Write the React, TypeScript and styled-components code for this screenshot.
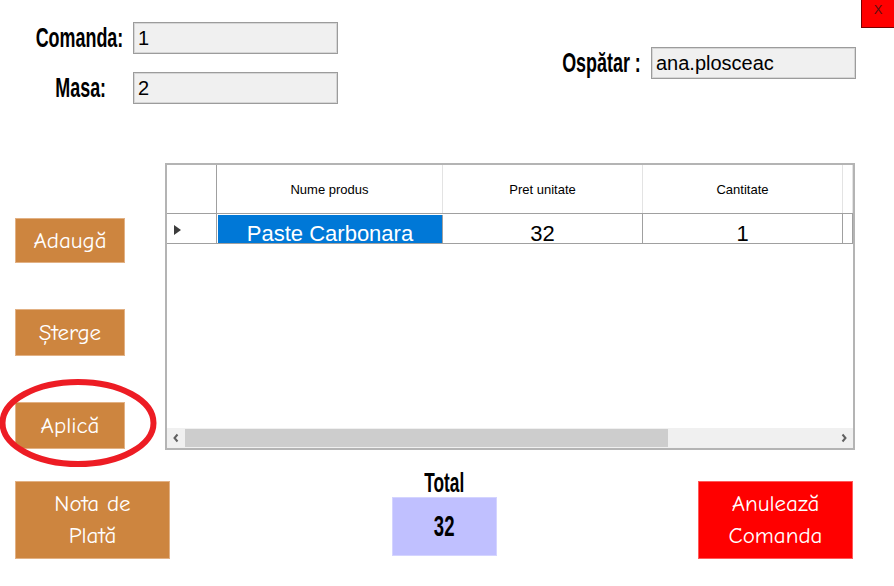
import styled, { createGlobalStyle } from "styled-components";

const GlobalStyle = createGlobalStyle`
  html, body {
    margin: 0;
    padding: 0;
    background: #ffffff;
  }
  * {
    box-sizing: border-box;
  }
`;

const Page = styled.div`
  position: relative;
  width: 894px;
  height: 586px;
  overflow: hidden;
  background: #ffffff;
  font-family: "Liberation Sans", Arial, sans-serif;
`;

const CloseButton = styled.button`
  position: absolute;
  top: 0;
  right: 0;
  width: 33px;
  height: 28px;
  padding: 0 0 8px;
  background: #ff0000;
  border: 1px solid #7a0000;
  border-top: none;
  border-right: none;
  color: #5a1010;
  font-family: "Liberation Sans", Arial, sans-serif;
  font-size: 13px;
  line-height: 1;
`;

const Top = styled.div`
  display: flex;
  justify-content: space-between;
  padding: 22px 38px 0 35px;
`;

const Fields = styled.div`
  display: grid;
  grid-template-columns: 88px 205px;
  column-gap: 10px;
  row-gap: 18px;
  align-items: center;
`;

const Waiter = styled.div`
  display: flex;
  align-items: center;
  gap: 9px;
  margin-top: 25px;
  height: 32px;
`;

const LabelBox = styled.div<{ $w: number; $shift?: number }>`
  width: ${({ $w }) => $w}px;
  display: flex;
  justify-content: center;
  align-items: center;
  padding-left: ${({ $shift }) => $shift ?? 0}px;
`;

const CondText = styled.span<{ $size?: number }>`
  display: inline-block;
  white-space: nowrap;
  font-family: "Liberation Sans", Arial, sans-serif;
  font-weight: 700;
  font-size: ${({ $size }) => $size ?? 28}px;
  line-height: 1;
  color: #000000;
  transform: scaleX(0.64);
`;

const TextBox = styled.div`
  width: 205px;
  height: 32px;
  padding: 2px 0 0 4px;
  background: #f0f0f0;
  border: 1px solid #9c9c9c;
  box-shadow: inset 0 0 0 1px #d6d6d6;
  font-family: "Liberation Sans", Arial, sans-serif;
  font-size: 20px;
  line-height: 27px;
  color: #000000;
`;

const Middle = styled.div`
  display: flex;
  margin-top: 59px;
`;

const Actions = styled.div`
  width: 165px;
  display: flex;
  flex-direction: column;
  align-items: flex-start;
  gap: 46px;
  padding: 55px 0 0 15px;
`;

const ActionButton = styled.button<{ $w: number; $h: number; $danger?: boolean }>`
  position: relative;
  width: ${({ $w }) => $w}px;
  height: ${({ $h }) => $h}px;
  padding: 0;
  background: ${({ $danger }) => ($danger ? "#ff0000" : "#cd853f")};
  border: 1px solid ${({ $danger }) => ($danger ? "#ff5a5a" : "#e2b184")};
  color: #ffffff;
  font-family: "Comic Sans MS", "Comic Neue", "DejaVu Sans", sans-serif;
  font-size: 23px;
  line-height: 32px;
  text-align: center;
`;

const Highlight = styled.svg`
  position: absolute;
  left: -17px;
  top: -25px;
  width: 158px;
  height: 90px;
  overflow: visible;
  pointer-events: none;
`;

const Grid = styled.div`
  width: 690px;
  height: 287px;
  display: flex;
  flex-direction: column;
  border: 2px solid #b4b4b4;
  background: #ffffff;
`;

const GridRow = styled.div<{ $h: number }>`
  display: grid;
  grid-template-columns: 50px 226px 200px 200px 10px;
  height: ${({ $h }) => $h}px;
  border-bottom: 1px solid #a0a0a0;
`;

const HeaderCell = styled.div<{ $corner?: boolean }>`
  display: flex;
  align-items: center;
  justify-content: center;
  border-right: 1px solid ${({ $corner }) => ($corner ? "#a0a0a0" : "#e3e3e3")};
  font-family: "Liberation Sans", Arial, sans-serif;
  font-size: 13px;
  color: #000000;
`;

const Cell = styled.div<{ $selected?: boolean }>`
  display: flex;
  align-items: flex-end;
  justify-content: center;
  border-right: 1px solid #a0a0a0;
  overflow: hidden;
  background: ${({ $selected }) => ($selected ? "#0078d7" : "#ffffff")};
  color: ${({ $selected }) => ($selected ? "#ffffff" : "#000000")};
  font-family: "Liberation Sans", Arial, sans-serif;
  font-size: 22px;
  line-height: 18px;
  ${({ $selected }) => ($selected ? "margin: 1px 0 0 1px;" : "")}
`;

const RowHeadCell = styled.div`
  display: flex;
  align-items: center;
  padding: 2px 0 0 7px;
  border-right: 1px solid #a0a0a0;
`;

const GridBody = styled.div`
  flex: 1;
  background: #ffffff;
`;

const ScrollBar = styled.div`
  height: 20px;
  display: flex;
  align-items: center;
  background: #f0f0f0;
`;

const ScrollArrow = styled.div`
  width: 18px;
  height: 20px;
  display: flex;
  align-items: center;
  justify-content: center;
`;

const ScrollTrack = styled.div`
  flex: 1;
  height: 18px;
  display: flex;
`;

const ScrollThumb = styled.div`
  width: 483px;
  height: 100%;
  background: #cdcdcd;
`;

const Bottom = styled.div`
  display: flex;
  align-items: flex-start;
  margin-top: 20px;
  padding: 0 41px 0 15px;
`;

const TotalColumn = styled.div`
  display: flex;
  flex-direction: column;
  align-items: center;
  width: 105px;
  margin-left: 222px;
`;

const TotalTitle = styled.div`
  height: 27px;
  display: flex;
  align-items: center;
  justify-content: center;
`;

const TotalBox = styled.div`
  width: 105px;
  height: 59px;
  display: flex;
  align-items: center;
  justify-content: center;
  background: #c0c0ff;
  border: 1px solid #d4d4ff;
`;

const BottomButton = styled(ActionButton)`
  margin-top: 11px;
`;

const Spacer = styled.div`
  flex: 1;
`;

const Chevron = ({ dir }: { dir: "left" | "right" }) => (
  <svg width="8" height="10" viewBox="0 0 8 10">
    <polyline
      points={dir === "left" ? "5.5,1.5 2.5,5 5.5,8.5" : "2.5,1.5 5.5,5 2.5,8.5"}
      fill="none"
      stroke="#606060"
      strokeWidth="2"
    />
  </svg>
);

const App = () => {
  return (
    <Page>
      <GlobalStyle />
      <CloseButton>X</CloseButton>

      <Top>
        <Fields>
          <LabelBox $w={88}>
            <CondText>Comanda:</CondText>
          </LabelBox>
          <TextBox>1</TextBox>
          <LabelBox $w={88} $shift={4}>
            <CondText>Masa:</CondText>
          </LabelBox>
          <TextBox>2</TextBox>
        </Fields>
        <Waiter>
          <LabelBox $w={82}>
            <CondText>Ospătar :</CondText>
          </LabelBox>
          <TextBox>ana.plosceac</TextBox>
        </Waiter>
      </Top>

      <Middle>
        <Actions>
          <ActionButton $w={110} $h={45}>Adaugă</ActionButton>
          <ActionButton $w={110} $h={47}>Șterge</ActionButton>
          <ActionButton $w={110} $h={47}>
            Aplică
            <Highlight viewBox="0 0 158 90">
              <ellipse cx="79" cy="45" rx="75.5" ry="41" fill="none" stroke="#ed1c24" strokeWidth="6" />
            </Highlight>
          </ActionButton>
        </Actions>

        <Grid>
          <GridRow $h={49}>
            <HeaderCell $corner />
            <HeaderCell>Nume produs</HeaderCell>
            <HeaderCell>Pret unitate</HeaderCell>
            <HeaderCell>Cantitate</HeaderCell>
            <HeaderCell />
          </GridRow>
          <GridRow $h={30}>
            <RowHeadCell>
              <svg width="7" height="10" viewBox="0 0 7 10">
                <polygon points="0,0 7,5 0,10" fill="#3c3c3c" />
              </svg>
            </RowHeadCell>
            <Cell $selected>Paste Carbonara</Cell>
            <Cell>32</Cell>
            <Cell>1</Cell>
            <Cell />
          </GridRow>
          <GridBody />
          <ScrollBar>
            <ScrollArrow>
              <Chevron dir="left" />
            </ScrollArrow>
            <ScrollTrack>
              <ScrollThumb />
            </ScrollTrack>
            <ScrollArrow>
              <Chevron dir="right" />
            </ScrollArrow>
          </ScrollBar>
        </Grid>
      </Middle>

      <Bottom>
        <BottomButton $w={155} $h={78}>
          Nota de
          <br />
          Plată
        </BottomButton>
        <TotalColumn>
          <TotalTitle>
            <CondText $size={27}>Total</CondText>
          </TotalTitle>
          <TotalBox>
            <CondText $size={29}>32</CondText>
          </TotalBox>
        </TotalColumn>
        <Spacer />
        <BottomButton $w={155} $h={78} $danger>
          Anulează
          <br />
          Comanda
        </BottomButton>
      </Bottom>
    </Page>
  );
};

export default App;
